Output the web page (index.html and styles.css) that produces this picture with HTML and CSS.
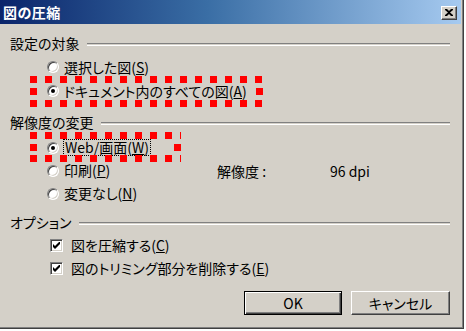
FILE: index.html
```html
<!DOCTYPE html>
<html lang="ja">
<head>
<meta charset="utf-8">
<title>図の圧縮</title>
<link rel="stylesheet" href="styles.css">
</head>
<body>
<div class="window">
  <div class="titlebar">
    <span class="title">図の圧縮</span>
    <span class="close"><svg width="8" height="7" viewBox="0 0 8 7"><path d="M0 0h2l2 2 2-2h2v1L5 3.5 8 6v1H6L4 5 2 7H0V6l3-2.5L0 1z" fill="#000"/></svg></span>
  </div>
  <div class="content">
    <div class="group-head"><span>設定の対象</span><span class="rule"></span></div>
    <div class="row"><span class="radio"></span><span class="label">選択した図(<u>S</u>)</span></div>
    <div class="row hl hl-a"><span class="radio on"></span><span class="label">ドキュメント内のすべての図(<u>A</u>)</span></div>

    <div class="group-head gh2"><span>解像度の変更</span><span class="rule"></span></div>
    <div class="row r23 hl hl-w"><span class="radio on"></span><span class="label focus">Web/画面(<u>W</u>)</span></div>
    <div class="row r23"><span class="radio"></span><span class="label fixed">印刷(<u>P</u>)</span><span class="res-label">解像度 :</span><span class="res-val">96 dpi</span></div>
    <div class="row r23"><span class="radio"></span><span class="label">変更なし(<u>N</u>)</span></div>

    <div class="group-head gh3"><span>オプション</span><span class="rule"></span></div>
    <div class="row r23 crow"><span class="check"><svg width="7" height="7" viewBox="0 0 7 7"><path d="M0 2v3l2 2 5-5V-1L2 4z" fill="#000"/></svg></span><span class="label">図を圧縮する(<u>C</u>)</span></div>
    <div class="row r23 crow"><span class="check"><svg width="7" height="7" viewBox="0 0 7 7"><path d="M0 2v3l2 2 5-5V-1L2 4z" fill="#000"/></svg></span><span class="label">図のトリミング部分を削除する(<u>E</u>)</span></div>

    <div class="buttons">
      <span class="btn default">OK</span>
      <span class="btn">キャンセル</span>
    </div>
  </div>
</div>
</body>
</html>
```
FILE: styles.css
```css
html, body {
  margin: 0;
  padding: 0;
  background: #ffffff;
}
body {
  font-family: "Noto Sans CJK JP", "Noto Sans", sans-serif;
  font-size: 14px;
  color: #000;
  font-feature-settings: "palt";
}
.window {
  width: 464px;
  height: 329px;
  box-sizing: border-box;
  background: #d4d0c8;
  border-right: 1px solid #404040;
  border-bottom: 1px solid #404040;
  box-shadow: inset -1px -1px 0 #808080;
  display: flex;
  flex-direction: column;
}
.titlebar {
  height: 24px;
  margin-right: 2px;
  background: linear-gradient(90deg, #0a246a 0%, #3a6ea5 45%, #a6caf0 100%);
  display: flex;
  align-items: center;
  justify-content: space-between;
  padding: 0 4px 0 3px;
}
.title {
  color: #fff;
  font-weight: bold;
  font-size: 14px;
  line-height: 24px;
  letter-spacing: 0.5px;
}
.close {
  width: 16px;
  height: 14px;
  box-sizing: border-box;
  background: #d4d0c8;
  border: 1px solid;
  border-color: #fff #404040 #404040 #fff;
  box-shadow: inset -1px -1px 0 #808080;
  display: flex;
  align-items: center;
  justify-content: center;
  margin-top: 1px;
}
.content {
  padding: 7px 13px 0 10px;
}
.group-head {
  height: 24px;
  display: flex;
  align-items: center;
}
.group-head .rule {
  flex: 1;
  height: 1px;
  border-top: 1px solid #808080;
  border-bottom: 1px solid #fff;
  margin-left: 7px;
  margin-top: 3px;
}
.gh2 { margin-top: 7px; }
.gh3 { margin-top: 5px; }
.row {
  height: 24px;
  display: flex;
  align-items: center;
  padding-left: 37px;
  position: relative;
}
.r23 { height: 23px; }
.gh2 + .row { margin-top: 2px; }
.radio {
  width: 12px;
  height: 12px;
  box-sizing: border-box;
  border-radius: 50%;
  background: #fff;
  border: 1px solid;
  border-color: #808080 #fff #fff #808080;
  box-shadow: inset 1px 1px 0 #404040, inset -1px -1px 0 #d4d0c8;
  position: relative;
  flex: none;
}
.radio.on::after {
  content: "";
  position: absolute;
  left: 3px;
  top: 3px;
  width: 4px;
  height: 4px;
  border-radius: 50%;
  background: #000;
}
.label {
  margin-left: 5px;
  line-height: 17px;
  white-space: nowrap;
}
.label.focus {
  margin-left: 4px;
  padding: 0 1px;
  line-height: 15px;
  border: 1px dotted #000;
}
.label.fixed {
  width: 153px;
  flex: none;
}
.res-label {
  width: 113px;
  flex: none;
}
.hl::before {
  content: "";
  position: absolute;
  left: 20px;
  pointer-events: none;
  background:
    repeating-linear-gradient(90deg, #f00 0 7px, transparent 7px 15px) left top / 100% 7px no-repeat,
    repeating-linear-gradient(90deg, #f00 0 7px, transparent 7px 15px) left bottom / 100% 7px no-repeat,
    linear-gradient(#f00, #f00) left center / 7px 7px no-repeat,
    linear-gradient(#f00, #f00) right center / 7px 7px no-repeat;
}
.hl-a::before {
  top: -3px;
  width: 233px;
  height: 31px;
}
.hl-w::before {
  top: -4px;
  width: 151px;
  height: 30px;
}
.crow { padding-left: 40px; }
.crow .label { margin-left: 8px; }
.check {
  width: 13px;
  height: 13px;
  box-sizing: border-box;
  background: #fff;
  border: 1px solid;
  border-color: #808080 #fff #fff #808080;
  box-shadow: inset 1px 1px 0 #404040, inset -1px -1px 0 #d4d0c8;
  display: flex;
  align-items: center;
  justify-content: center;
  flex: none;
}
.buttons {
  margin-top: 11px;
  display: flex;
  justify-content: flex-end;
  gap: 9px;
}
.btn {
  height: 24px;
  box-sizing: border-box;
  display: flex;
  align-items: center;
  justify-content: center;
  width: 99px;
  background: #d4d0c8;
  border: 1px solid;
  border-color: #fff #404040 #404040 #fff;
  box-shadow: inset -1px -1px 0 #808080;
}
.btn.default {
  width: 98px;
  border-color: #000;
  box-shadow: inset 1px 1px 0 #fff, inset -1px -1px 0 #404040, inset -2px -2px 0 #808080;
}
```
